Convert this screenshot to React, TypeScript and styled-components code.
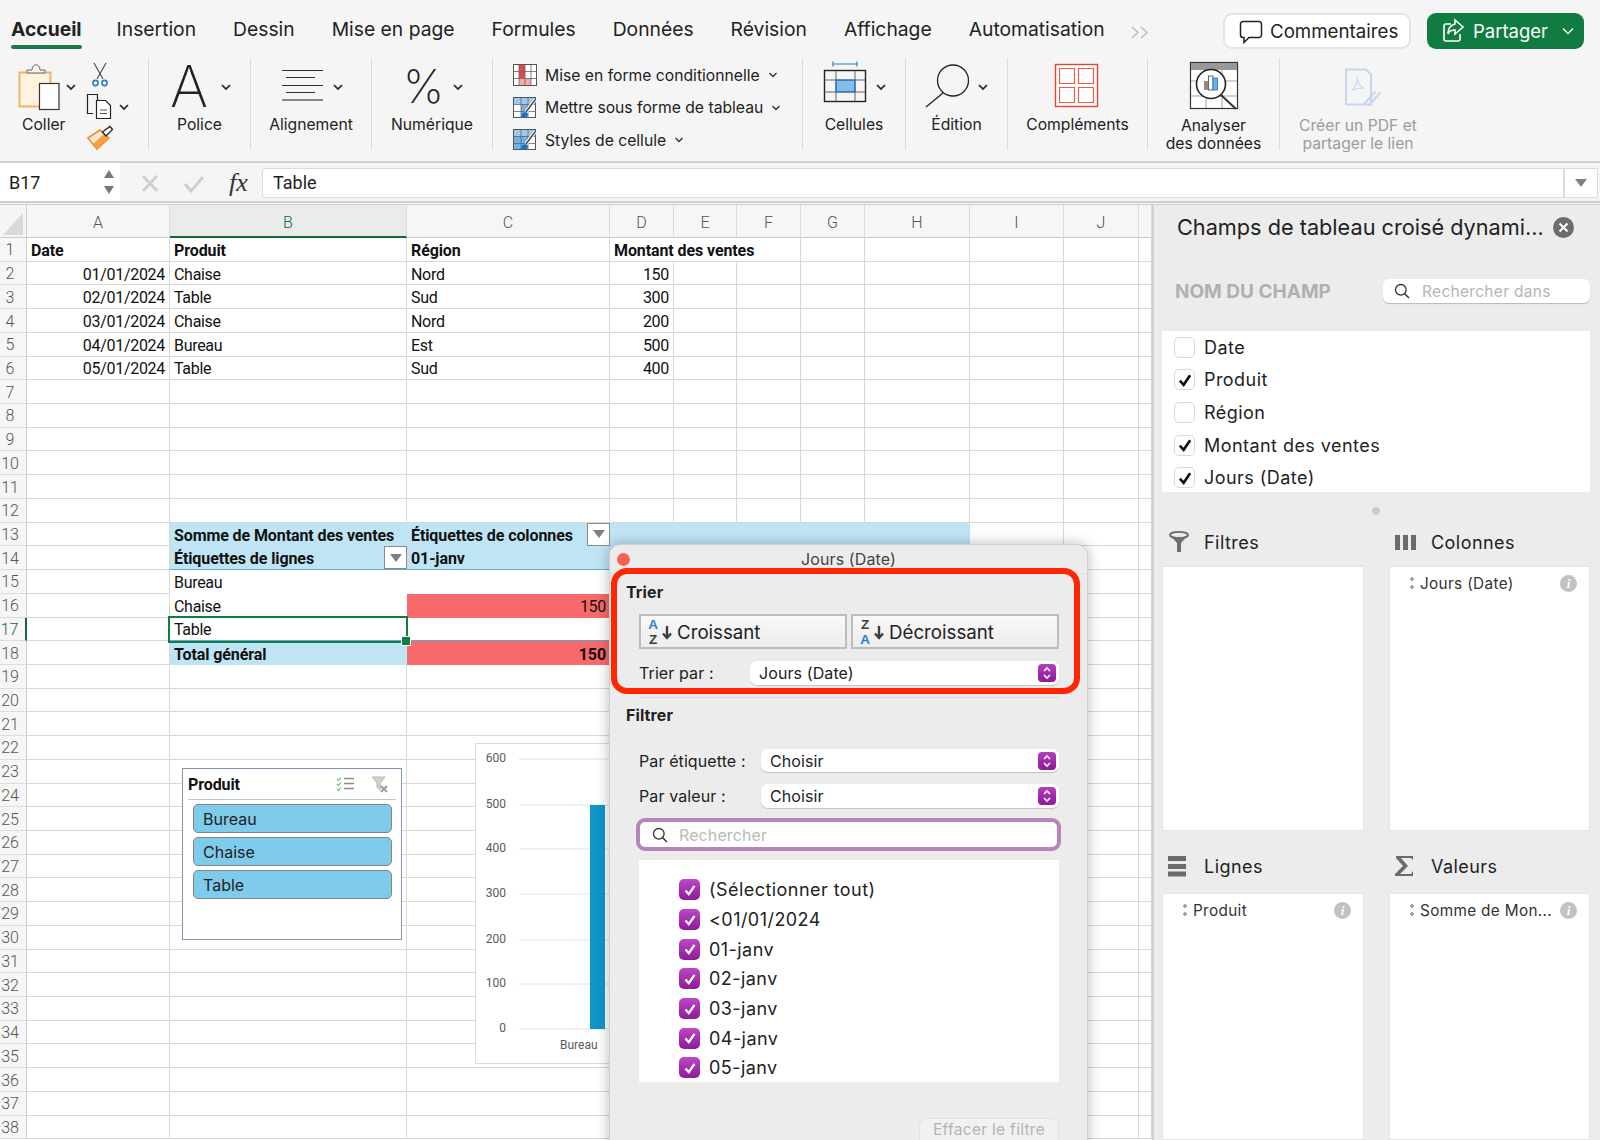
import React from "react";
import styled, { createGlobalStyle } from "styled-components";

const Global = createGlobalStyle`
  html, body { margin: 0; padding: 0; background: #f5f5f5; }
  * { box-sizing: border-box; }
`;

const UI = `Inter, "Liberation Sans", sans-serif`;
const SHEET = `Roboto, "Liberation Sans", sans-serif`;

const Page = styled.div`
  width: 1600px; height: 1140px; overflow: hidden; display: flex; flex-direction: column;
  background: #f5f5f5; font-family: ${UI}; color: #1d1d1d;
`;
const TopBar = styled.div`display: flex; height: 50px; padding: 0 16px 0 11px; align-items: flex-start;`;
const Tabs = styled.div`display: flex; gap: 37px; margin-top: 16px;`;
const Tab = styled.div<{ $active?: boolean }>`
  height: 33px; font-size: 19.3px; line-height: 26px; font-weight: ${p => (p.$active ? 700 : 400)};
  margin-right: ${p => (p.$active ? "-2px" : "0")};
  color: #222; white-space: nowrap;
  &::after { content: ""; display: block; height: 4px; margin-top: 3px; border-radius: 2px; background: ${p => (p.$active ? "#1a7a4a" : "transparent")}; }
`;
const More = styled.div`padding-top: 7px; margin-left: -11px;`;
const TopActions = styled.div`display: flex; gap: 16px; margin: 13px 0 0 auto;`;
const CommentBtn = styled.div`
  width: 188px; height: 36px; background: #fff; border: 2px solid #e4e4e4; border-radius: 9px;
  display: flex; align-items: center; padding-left: 13px; gap: 6px; font-size: 18.7px; color: #222;
`;
const ShareBtn = styled.div`
  width: 157px; height: 36px; background: #107c41; border-radius: 9px; display: flex; align-items: center;
  padding-left: 15px; gap: 9px; font-size: 18.5px; color: #fff;
`;

const Ribbon = styled.div`display: flex; height: 113px; padding-top: 8px; border-bottom: 2px solid #d2d2d2; align-items: flex-start;`;
const Group = styled.div<{ $w: number; $last?: boolean }>`
  width: ${p => p.$w}px; height: 92px; flex: none; display: flex; flex-direction: column; align-items: center;
  border-right: ${p => (p.$last ? "none" : "1px solid #dadada")};
  svg { flex: none; overflow: visible; }
`;
const PasteRow = styled.div`display: flex; width: 100%;`;
const PasteCol = styled.div`width: 84px; flex: none; display: flex; flex-direction: column; align-items: flex-start;`;
const RLabel = styled.div<{ $dim?: boolean; $pl?: number; $two?: boolean }>`
  margin-top: ${p => (p.$two ? 7 : 6)}px; padding-left: ${p => p.$pl ?? 0}px; font-size: 15.7px; line-height: 18px; text-align: center;
  color: ${p => (p.$dim ? "#9c9c9c" : "#222")}; white-space: nowrap;
`;
const StyleGroup = styled(Group)`padding: 1px 0 0 20px; align-items: flex-start;`;
const StyleRow = styled.div`display: flex; flex: none; height: 32.5px; align-items: center; gap: 8px; font-size: 15.7px; color: #222; white-space: nowrap;`;

const FormulaBar = styled.div`display: flex; height: 40px; border-bottom: 2px solid #cfcfcf; flex: none;`;
const NameBox = styled.div`
  width: 120px; background: #fff; padding-left: 9px; display: flex; align-items: center; justify-content: space-between;
  font-size: 18px; padding-right: 4px; font-family: ${SHEET};
`;
const FormulaTools = styled.div`width: 142px; flex: none; display: flex; align-items: center;`;
const FormulaInput = styled.div`
  flex: 1; height: 30px; margin-top: 5px; background: #fff; border: 1px solid #dcdcdc; border-radius: 3px 0 0 3px;
  padding-left: 10px; line-height: 28px; font-size: 18px; font-family: ${SHEET};
`;
const FormulaDrop = styled.div`
  width: 34px; height: 30px; margin: 5px 2px 0 0; background: #fff; border: 1px solid #dcdcdc; display: flex; align-items: center; justify-content: center;
`;

const Main = styled.div`display: flex; flex: 1; min-height: 0; border-top: 1px solid #cfcfcf; margin-top: 1px;`;
const Sheet = styled.div`
  position: relative; width: 1152px; flex: none; background: #fff; overflow: hidden; display: grid;
  grid-template-columns: 27px 143px 237px 203px 64px 63px 64px 64px 105px 94px 75px 13px;
  grid-template-rows: 33px repeat(38, 23.72px);
  font-family: ${SHEET}; font-size: 16px; color: #111;
`;
const Corner = styled.div`
  background: #f5f5f5; border-right: 1px solid #d0d0d0; border-bottom: 1px solid #c8c8c8;
  svg { display: block; }
`;
const ColHead = styled.div<{ $on?: boolean }>`
  padding-top: 3px; display: flex; align-items: center; justify-content: center; font-size: 16px; font-weight: 300;
  background: ${p => (p.$on ? "#ebebeb" : "#f6f6f6")}; color: ${p => (p.$on ? "#0e6b37" : "#555")};
  border-right: 1px solid #dcdcdc; border-bottom: ${p => (p.$on ? "2px solid #0e6b37" : "1px solid #c8c8c8")};
`;
const RowHead = styled.div<{ $on?: boolean }>`
  padding: 1px 6px 0 0; display: flex; align-items: center; justify-content: center; font-size: 16px; font-weight: 300;
  background: #f6f6f6; color: ${p => (p.$on ? "#0e6b37" : "#555")};
  border-bottom: 1px solid #dcdcdc; border-right: ${p => (p.$on ? "2px solid #0e6b37" : "1px solid #cfcfcf")};
`;
const Cell = styled.div<{ $bg?: string; $b?: boolean; $right?: boolean; $span?: number; $noR?: boolean; $noB?: boolean; $line?: boolean }>`
  position: relative; display: flex; align-items: center; white-space: nowrap; min-width: 0;
  padding: 2px 4px 0; letter-spacing: ${p => (p.$b ? "-0.1px" : "-0.3px")};
  justify-content: ${p => (p.$right ? "flex-end" : "flex-start")};
  font-weight: ${p => (p.$b ? 700 : 400)};
  background: ${p => p.$bg ?? "transparent"};
  grid-column: span ${p => p.$span ?? 1};
  border-right: ${p => (p.$noR ? "none" : "1px solid #d8d8d8")};
  border-bottom: ${p => (p.$line ? "1.5px solid #5fa8d3" : p.$noB ? "none" : "1px solid #d8d8d8")};
`;
const Selection = styled.div`
  position: absolute; z-index: 2; left: -2px; top: -2px; width: 240px; height: 27px; border: 2px solid #107c41;
  &::after { content: ""; position: absolute; right: -5px; bottom: -5px; width: 8px; height: 8px; background: #107c41; border: 1px solid #fff; }
`;
const FilterBtn = styled.div`
  position: absolute; right: 0; top: 0; width: 23px; height: 23px; background: #fff; border: 1px solid #8a8a8a;
  display: flex; align-items: center; justify-content: center;
`;

const Slicer = styled.div`
  position: absolute; z-index: 1; left: 182px; top: 563px; width: 220px; height: 172px; background: #fff; border: 1px solid #7f96ae;
  padding: 0 5px; display: flex; flex-direction: column;
`;
const SlicerHead = styled.div`
  height: 31px; flex: none; border-bottom: 1px solid #b8c6d6; display: flex; align-items: center; font-weight: 700; font-size: 16px; letter-spacing: -0.1px;
  svg:first-of-type { margin-left: auto; margin-right: 16px; } svg:last-of-type { margin-right: 7px; }
`;
const SlicerBtn = styled.div`
  height: 29px; flex: none; margin: 4px 4px 0 5px; padding-left: 9px; background: #7fcbec; border: 1px solid #858585; border-radius: 5px;
  display: flex; align-items: center; font-size: 16px; font-family: ${UI}; font-weight: 400; color: #222;
`;
const Chart = styled.div`
  position: absolute; z-index: 1; left: 475px; top: 538px; width: 140px; height: 321px; background: #fff; border: 1px solid #dcdcdc;
  svg { display: block; }
`;

const Dialog = styled.div`
  position: absolute; z-index: 3; left: 609px; top: 339px; width: 479px; height: 640px; background: #ececec; border: 1px solid #cfcfcf;
  border-radius: 11px 11px 0 0; box-shadow: 0 0 14px rgba(0,0,0,.28); font-family: ${UI}; font-size: 16px; letter-spacing: 0.1px; color: #222;
`;
const DialogTitle = styled.div`
  height: 29px; display: grid; grid-template-columns: 1fr auto 1fr; align-items: center; border-bottom: 1px solid #dcdcdc; font-size: 16px; color: #444;
`;
const CloseDot = styled.div`width: 13px; height: 13px; margin-left: 7px; border-radius: 50%; background: #fa5f57;`;
const Highlight = styled.div`
  position: absolute; left: 1px; top: 23px; width: 469px; height: 126px; border: 6.5px solid #ff2600; border-radius: 16px; pointer-events: none;
`;
const Heading = styled.div<{ $mt: number }>`margin: ${p => p.$mt}px 0 0 16px; height: 20px; line-height: 20px; font-size: 16px; font-weight: 700;`;
const Indent = styled.div<{ $mt: number }>`margin: ${p => p.$mt}px 28px 0 29px;`;
const SortRow = styled(Indent)`display: flex; gap: 4px;`;
const SortBtn = styled.div`
  flex: 1; height: 35px; border: 2px solid #bcbcbc; background: linear-gradient(#f8f8f8, #ededed);
  display: flex; align-items: center; padding: 1px 0 0 6px; font-size: 18.7px; letter-spacing: 0;
`;
const SortIcon = styled.div`display: flex; flex-direction: column; align-items: center; font: 700 13.5px/15.5px "Liberation Sans", sans-serif; width: 12px;`;
const SortLetter = styled.span<{ $blue?: boolean }>`color: ${p => (p.$blue ? "#2f7fd0" : "#3d3d3d")};`;
const FieldRow = styled(Indent)`display: flex; align-items: center; justify-content: space-between;`;
const Select = styled.div<{ $w: number; $h: number }>`
  width: ${p => p.$w}px; height: ${p => p.$h}px; background: #fff; border-radius: 7px; box-shadow: 0 1px 1px rgba(0,0,0,.18);
  display: flex; align-items: center; justify-content: space-between; padding: 0 3px 0 9px;
`;
const Stepper = styled.div`
  width: 18px; height: 18px; border-radius: 4px; background: linear-gradient(#b53dc0, #8d1a96); display: flex; align-items: center; justify-content: center;
`;
const Sep = styled(Indent)`height: 1px; background: #d8d8d8;`;
const SearchBox = styled.div`
  margin: 10px 26px 0 26px; height: 33px; background: #fff; border: 4px solid #b685b8; border-radius: 9px;
  display: flex; align-items: center; padding-left: 12px; gap: 11px; color: #b9b9b9;
`;
const DialogList = styled(Indent)`
  height: 222px; background: #fff; padding: 15px 0 0 40px; overflow: hidden;
`;
const CheckRow = styled.div`display: flex; align-items: center; gap: 9px; height: 29.7px; font-size: 18px; letter-spacing: 0.45px;`;
const PurpleBox = styled.div`
  width: 21px; height: 21px; border-radius: 5px; background: linear-gradient(#bd48c8, #8d1a96); display: flex; align-items: center; justify-content: center;
`;
const ClearBtn = styled.div`
  margin: 36px 28px 0 auto; width: 140px; height: 34px; background: #f1f1f1; border: 1px solid #e2e2e2; border-radius: 7px;
  color: #b4b4b4; text-align: center; line-height: 20px; font-size: 15.5px; padding-top: 1px; letter-spacing: .3px;
`;

const Panel = styled.div`
  flex: 1; background: #ececec; border-left: 2px solid #cfcfcf; padding-top: 10px; display: flex; flex-direction: column;
  font-size: 18px; letter-spacing: .45px; overflow: hidden; color: #222;
`;
const PanelTitle = styled.div`display: flex; align-items: center; height: 24px; padding-left: 23px; gap: 9px; font-size: 21.7px; letter-spacing: 0; white-space: nowrap;`;
const CloseCircle = styled.div`
  width: 21px; height: 21px; border-radius: 50%; background: #6d6d6d; display: flex; align-items: center; justify-content: center; flex: none;
`;
const PanelSearchRow = styled.div`display: flex; align-items: center; justify-content: space-between; margin: 40px 10px 0 21px;`;
const FieldLabel = styled.div`font-size: 19px; font-weight: 700; color: #b0b0b0; letter-spacing: 0;`;
const PanelSearch = styled.div`
  width: 207px; height: 24px; background: #fff; border-radius: 6px; box-shadow: 0 1px 1px rgba(0,0,0,.22);
  display: flex; align-items: center; padding-left: 11px; gap: 12px; font-size: 15.5px; color: #b5b5b5; letter-spacing: .3px;
`;
const PanelList = styled.div`margin: 28px 10px 0 8px; height: 161px; flex: none; background: #fff; overflow: hidden; padding-left: 12px;`;
const PanelRow = styled.div`display: flex; align-items: center; height: 32.6px; gap: 9px;`;
const WhiteBox = styled.div`
  width: 21px; height: 21px; border-radius: 5px; background: #fff; border: 1px solid #d8d8d8; display: flex; align-items: center; justify-content: center;
`;
const Dot = styled.div`width: 8px; height: 8px; flex: none; border-radius: 50%; background: #cbcbcb; margin: 15px auto 0; transform: translateX(-1px);`;
const Fields = styled.div`
  display: grid; grid-template-columns: 202px 201px; column-gap: 25px; row-gap: 24px; margin: 16px 0 0 8px;
  grid-template-rows: 300px 1fr; flex: 1; min-height: 0;
`;
const FieldCol = styled.div`display: flex; flex-direction: column; min-height: 0;`;
const AreaHead = styled.div<{ $h: number }>`
  height: ${p => p.$h}px; flex: none; padding: 0 0 0 6px; display: flex; align-items: flex-start;
  & > div:first-child { width: 36px; flex: none; }
  & > span { line-height: 24px; }
`;
const AreaBox = styled.div`flex: 1; background: #fff; border: 1px solid #e4e4e4;`;
const AreaItem = styled.div`
  margin-top: 4px; height: 24px; padding: 0 12px 0 20px; display: flex; align-items: center; font-size: 15.3px; color: #333; letter-spacing: .35px; white-space: nowrap;
`;
const Grip = styled.div`
  width: 4px; height: 12px; margin-right: 6px; flex: none;
  background: radial-gradient(circle 2px at 2px 2px, #a5a5a5 98%, transparent) top/4px 4px no-repeat,
              radial-gradient(circle 2px at 2px 2px, #a5a5a5 98%, transparent) bottom/4px 4px no-repeat;
`;
const Info = styled.div`
  margin-left: auto; width: 17px; height: 17px; border-radius: 50%; background: #c2c2c2; color: #fff; flex: none;
  font: italic 700 13px/17px "Liberation Serif", serif; text-align: center; letter-spacing: 0;
`;

const Chev = ({ x, y, c = "#222" }: { x: number; y: number; c?: string }) => (
  <path d={`M${x - 4} ${y - 2}l4 4 4-4`} fill="none" stroke={c} strokeWidth="1.7" />
);
const SmallChev = () => (
  <svg width="10" height="8" viewBox="0 0 10 8"><path d="M1.5 2 5 5.5 8.5 2" fill="none" stroke="#333" strokeWidth="1.4" /></svg>
);
const Check = ({ c = "#fff", s = 14 }: { c?: string; s?: number }) => (
  <svg width={s} height={s} viewBox="0 0 14 14"><path d="M2.5 7.5 5.8 11.2 11.5 2.8" fill="none" stroke={c} strokeWidth="2.3" /></svg>
);
const StepIcon = () => (
  <svg width="10" height="14" viewBox="0 0 10 14"><path d="M2 5 5 2l3 3M2 9l3 3 3-3" fill="none" stroke="#fff" strokeWidth="1.6" /></svg>
);
const Loupe = ({ s = 16 }: { s?: number }) => (
  <svg width={s} height={s} viewBox="0 0 16 16"><circle cx="6.8" cy="6.8" r="5.3" fill="none" stroke="#333" strokeWidth="1.3" /><path d="M10.7 10.7 15 15" stroke="#333" strokeWidth="1.5" /></svg>
);
const DownTri = () => (
  <svg width="12" height="8" viewBox="0 0 12 8"><path d="M0 0h12L6 8z" fill="#7f7f7f" /></svg>
);
const DownArrow = () => (
  <svg width="10" height="15" viewBox="0 0 10 15"><path d="M5 1v11M1 8.5 5 13l4-4.5" fill="none" stroke="#3d3d3d" strokeWidth="2.4" /></svg>
);

const PasteIcon = () => (
  <svg width="84" height="52">
    <rect x="19.5" y="14.5" width="31" height="34" fill="#fdf3df" stroke="#f3b266" strokeWidth="2" />
    <path d="M27 15v-3h5c0-7 8-7 8 0h5v3z" fill="#f5f5f5" stroke="#666" strokeWidth="1" />
    <rect x="39.5" y="25.5" width="19.5" height="26" fill="#fff" stroke="#333" strokeWidth="1.2" />
    <Chev x={71} y={29} />
  </svg>
);
const ToolsIcon = () => (
  <svg width="65" height="92">
    <path d="M10 5 19 21M22 5 13 21" stroke="#444" strokeWidth="1.1" fill="none" />
    <circle cx="11.5" cy="25" r="2.6" fill="none" stroke="#2a7fc9" strokeWidth="1.6" />
    <circle cx="20.5" cy="25" r="2.6" fill="none" stroke="#2a7fc9" strokeWidth="1.6" />
    <path d="M9 55.5H3.5v-19h10v6" fill="none" stroke="#222" strokeWidth="1.2" />
    <path d="M12.5 42.5h9l5 5v13h-14z" fill="#fff" stroke="#222" strokeWidth="1.2" />
    <path d="M16 52h7M16 55.5h7" stroke="#555" strokeWidth="1" />
    <Chev x={40} y={49} />
    <path d="M4 80 16 72 25 80 13 91z" fill="#fbe9d2" stroke="#ee8a2a" strokeWidth="1.6" />
    <path d="M9 86 20 76 25 80 13 91z" fill="#f5a13e" />
    <path d="M18.5 74 26 68.5l2.5 3-6.5 6.5z" fill="#fff" stroke="#222" strokeWidth="1.3" />
  </svg>
);
const PoliceIcon = () => (
  <svg width="101" height="52">
    <text x="21" y="49" fontFamily="Inter, sans-serif" fontWeight="200" fontSize="58" fill="#222">A</text>
    <Chev x={77} y={29} />
  </svg>
);
const AlignIcon = () => (
  <svg width="120" height="52">
    <path d="M31 12.5h41M35 19.5h29M31 27.5h41M35 34.5h29" stroke="#333" strokeWidth="1.2" />
    <path d="M31 42h41" stroke="#888" strokeWidth="1.8" />
    <Chev x={87} y={29} />
  </svg>
);
const PercentIcon = () => (
  <svg width="120" height="52">
    <text x="31" y="45" fontFamily="Inter, sans-serif" fontWeight="200" fontSize="46" fill="#222">%</text>
    <Chev x={86} y={29} />
  </svg>
);
const CondIcon = () => (
  <svg width="24" height="22" viewBox="0 0 24 22">
    <rect x=".5" y=".5" width="23" height="21" fill="#fff" stroke="#555" />
    <rect x="6" y="1" width="6" height="7" fill="#e8444b" /><rect x="6" y="14" width="12" height="7" fill="#f5a9ac" /><rect x="6" y="8" width="6" height="6" fill="#e8444b" />
    <path d="M6 1v20M12 1v20M18 1v20M1 7.5h22M1 14.5h22" stroke="#666" strokeWidth=".8" />
  </svg>
);
const TableIcon = ({ full }: { full?: boolean }) => (
  <svg width="24" height="22" viewBox="0 0 24 22">
    <rect x=".5" y=".5" width="22" height="20" fill="#fff" stroke="#555" />
    <rect x="1" y="1" width="21" height="6" fill="#9cc9ef" />
    {full ? <rect x="1" y="7" width="14" height="13" fill="#6fb2e8" /> : <rect x="8" y="7" width="7" height="13" fill="#6fb2e8" />}
    <path d="M1 7.5h22M1 14.5h22M8 1v20M15 1v20" stroke="#666" strokeWidth=".8" />
    <path d="M22 3 13 15" stroke="#fff" strokeWidth="3.4" /><path d="M22 3 13 15" stroke="#444" strokeWidth="1.4" />
    <path d="M8 21c0-5 3-7 6-5 2 3-2 5-6 5z" fill="#1f6fc0" />
  </svg>
);
const CellsIcon = () => (
  <svg width="103" height="52">
    <path d="M30 6h24M30 3.5v5M54 3.5v5" stroke="#2a7fc9" strokeWidth="1.2" />
    <rect x="33" y="22" width="19" height="12" fill="#85bdea" />
    <rect x="21.5" y="12.5" width="41" height="31" fill="none" stroke="#222" strokeWidth="1.4" />
    <path d="M21 22h41M21 34h41M33 12.5v31M52 12.5v31" stroke="#555" strokeWidth=".9" />
    <path d="M33 22h19v12H33z" fill="none" stroke="#1f6fc0" strokeWidth="1.2" />
    <Chev x={78} y={29} />
  </svg>
);
const FindIcon = () => (
  <svg width="102" height="52">
    <ellipse cx="47" cy="22.5" rx="15.5" ry="15.5" fill="none" stroke="#222" strokeWidth="1.3" />
    <path d="M37 35 20 49" stroke="#222" strokeWidth="1.3" />
    <Chev x={77} y={29} />
  </svg>
);
const AddinIcon = () => (
  <svg width="140" height="52">
    <rect x="47.5" y="6.5" width="42" height="42" fill="#fff" stroke="#e1462f" strokeWidth="1.4" />
    <path d="M51.5 10.5h15v15h-15zM70.5 10.5h15v15h-15zM51.5 29.5h15v15h-15zM70.5 29.5h15v15h-15z" fill="#fff" stroke="#e8604c" strokeWidth="1.2" />
  </svg>
);
const AnalyzeIcon = () => (
  <svg width="132" height="52">
    <rect x="42.5" y="4.5" width="47" height="46" fill="#fff" stroke="#333" strokeWidth="1.2" />
    <rect x="43" y="5" width="46" height="7" fill="#999" />
    <path d="M43 23h46M43 38h46M58 12v38M74 12v38" stroke="#999" strokeWidth=".9" />
    <circle cx="63" cy="26" r="14.5" fill="#fff" stroke="#222" strokeWidth="1.6" />
    <path d="M73 37 88 51" stroke="#333" strokeWidth="2" />
    <rect x="56" y="23" width="4.5" height="9" fill="#8a8a8a" />
    <rect x="60.5" y="18" width="4.5" height="14" fill="#fff" stroke="#444" strokeWidth=".8" />
    <rect x="65" y="20" width="4.5" height="12" fill="#6fb2e8" stroke="#1f6fc0" strokeWidth=".8" />
  </svg>
);
const PdfIcon = () => (
  <svg width="156" height="52">
    <path d="M66 11.5h20l5 5v30H66z" fill="none" stroke="#c6d6f2" strokeWidth="2" />
    <path d="M72 32c4-3 6-9 5-13 0 5 3 10 7 11-4 0-9 1-12 2z" fill="none" stroke="#c6d6f2" strokeWidth="1.2" />
    <path d="M84 46 95 34M89 47 100 35" stroke="#c6d6f2" strokeWidth="2.2" strokeLinecap="round" />
  </svg>
);

const SlicerCheck = () => (
  <svg width="19" height="16" viewBox="0 0 19 16">
    <path d="M1 3 2.5 4.5 5 1.5M1 8 2.5 9.5 5 6.5M1 13 2.5 14.5 5 11.5" fill="none" stroke="#69c06a" strokeWidth="1.1" />
    <path d="M8 2.5h10M8 7.5h10M8 12.5h10" stroke="#8c8c8c" strokeWidth="1.3" />
  </svg>
);
const SlicerClear = () => (
  <svg width="18" height="17" viewBox="0 0 18 17">
    <path d="M1 1h13L9.5 7v7L6 11.5V7z" fill="#d0d0d0" stroke="#bbb" />
    <path d="M10 10l6 6M16 10l-6 6" stroke="#999" strokeWidth="1.8" />
  </svg>
);

const ChartDraw = () => {
  const ys = [759, 805, 849, 894, 940, 984, 1029];
  const lbl = ["600", "500", "400", "300", "200", "100", "0"];
  return (
    <svg width="138" height="319">
      {ys.map((y, i) => (
        <g key={y}>
          <path d={`M43 ${y - 744}H138`} stroke="#e2e2e2" strokeWidth="1" />
          <text x="30" y={y - 744 + 3} textAnchor="end" fontFamily="Roboto, sans-serif" fontSize="12" fill="#595959">{lbl[i]}</text>
        </g>
      ))}
      <rect x="114" y={61} width="15" height="224" fill="#0f97cb" />
      <text x="84" y="305" fontFamily="Roboto, sans-serif" fontSize="12" fill="#595959">Bureau</text>
    </svg>
  );
};

const COLS = ["A", "B", "C", "D", "E", "F", "G", "H", "I", "J", ""];
const BLUE = "#bfe5f5";
const RED = "#f8696b";
type C = { t?: React.ReactNode; b?: boolean; r?: boolean; span?: number; bg?: string; noR?: boolean; noB?: boolean; line?: boolean; extra?: React.ReactNode };

const data: Record<number, Record<number, C>> = {
  1: { 1: { t: "Date", b: true }, 2: { t: "Produit", b: true }, 3: { t: "Région", b: true }, 4: { t: "Montant des ventes", b: true, span: 3 } },
  2: { 1: { t: "01/01/2024", r: true }, 2: { t: "Chaise" }, 3: { t: "Nord" }, 4: { t: "150", r: true } },
  3: { 1: { t: "02/01/2024", r: true }, 2: { t: "Table" }, 3: { t: "Sud" }, 4: { t: "300", r: true } },
  4: { 1: { t: "03/01/2024", r: true }, 2: { t: "Chaise" }, 3: { t: "Nord" }, 4: { t: "200", r: true } },
  5: { 1: { t: "04/01/2024", r: true }, 2: { t: "Bureau" }, 3: { t: "Est" }, 4: { t: "500", r: true } },
  6: { 1: { t: "05/01/2024", r: true }, 2: { t: "Table" }, 3: { t: "Sud" }, 4: { t: "400", r: true } },
};

const Cells = () => {
  const out: React.ReactNode[] = [];
  out.push(
    <Corner key="corner"><svg width="26" height="32"><path d="M3 30 23 8v22z" fill="#d9d9d9" /></svg></Corner>
  );
  COLS.forEach((c, i) => out.push(<ColHead key={`h${i}`} $on={c === "B"}>{c}</ColHead>));
  for (let r = 1; r <= 38; r++) {
    out.push(<RowHead key={`r${r}`} $on={r === 17}>{r}</RowHead>);
    let c = 1;
    while (c <= 11) {
      let d: C = data[r]?.[c] ?? {};
      const pivotTop = (r === 13 || r === 14) && c >= 2 && c <= 8;
      const pivotBody = r >= 15 && r <= 18 && (c === 2 || c === 3);
      if (pivotTop) {
        d = { bg: BLUE, noR: true, noB: r === 13, line: r === 14, b: true };
        if (r === 13 && c === 2) d.t = "Somme de Montant des ventes";
        if (r === 13 && c === 3) { d.t = "Étiquettes de colonnes"; d.extra = <FilterBtn><DownTri /></FilterBtn>; }
        if (r === 14 && c === 2) { d.t = "Étiquettes de lignes"; d.extra = <FilterBtn><DownTri /></FilterBtn>; }
        if (r === 14 && c === 3) d.t = "01-janv";
      }
      if (pivotBody) {
        d = { noR: true, noB: true };
        if (c === 2) d.t = ["Bureau", "Chaise", "Table", "Total général"][r - 15];
        if (r === 16 && c === 3) { d.bg = RED; d.t = "150"; d.r = true; }
        if (r === 17) { d.line = true; }
        if (r === 18) { d.b = true; d.bg = c === 2 ? BLUE : RED; if (c === 3) { d.t = "150"; d.r = true; } }
        if (r === 17 && c === 2) d.extra = <Selection />;
      }
      out.push(
        <Cell key={`${r}-${c}`} $b={d.b} $right={d.r} $span={d.span} $bg={d.bg} $noR={d.noR} $noB={d.noB} $line={d.line}>
          {d.t}{d.extra}
        </Cell>
      );
      c += d.span ?? 1;
    }
  }
  return <>{out}</>;
};

const SortGlyph = ({ top, bottom, topBlue }: { top: string; bottom: string; topBlue: boolean }) => (
  <SortIcon>
    <SortLetter $blue={topBlue}>{top}</SortLetter>
    <SortLetter $blue={!topBlue}>{bottom}</SortLetter>
  </SortIcon>
);
const Stack = styled.div`display: flex; align-items: center; gap: 3px; margin-right: 5px;`;

const FunnelIcon = () => (
  <svg width="22" height="22" viewBox="0 0 22 22" fill="none">
    <ellipse cx="11" cy="4" rx="9" ry="3" stroke="#6f6f6f" strokeWidth="2" />
    <path d="M2.5 5 9 12v9h4v-9l6.5-7" fill="#6f6f6f" />
    <ellipse cx="11" cy="4" rx="7" ry="2" fill="#ececec" />
  </svg>
);
const ColsIcon = () => (
  <svg width="21" height="22" viewBox="0 0 21 22"><path d="M0 4h5v15H0zM8 4h5v15H8zM16 4h5v15h-5z" fill="#6b6b6b" /></svg>
);
const RowsIcon = () => (
  <svg width="18" height="22" viewBox="0 0 18 22"><path d="M0 1h18v5H0zM0 9h18v5H0zM0 16.5h18v5H0z" fill="#6b6b6b" /></svg>
);
const SigmaIcon = () => (
  <svg width="19" height="22" viewBox="0 0 19 22"><path d="M1 1h17v4l-2-2H6l7 8-8 8h11l2-3v5H0v-2l8-8L1 3z" fill="#6b6b6b" /></svg>
);

export default function App() {
  return (
    <Page>
      <Global />
      <TopBar>
        <Tabs>
          <Tab $active>Accueil</Tab>
          {["Insertion", "Dessin", "Mise en page", "Formules", "Données", "Révision", "Affichage", "Automatisation"].map(t => <Tab key={t}>{t}</Tab>)}
          <More>
            <svg width="19" height="13" viewBox="0 0 19 13"><path d="M1 1l6 5.5L1 12M10 1l6 5.5-6 5.5" fill="none" stroke="#bdbdbd" strokeWidth="1.5" /></svg>
          </More>
        </Tabs>
        <TopActions>
          <CommentBtn>
            <svg width="26" height="26" viewBox="0 0 26 26"><path d="M5 3.5h16a2.5 2.5 0 0 1 2.5 2.5v11a2.5 2.5 0 0 1-2.5 2.5H11l-5 5v-5H5A2.5 2.5 0 0 1 2.5 17V6A2.5 2.5 0 0 1 5 3.5z" fill="none" stroke="#222" strokeWidth="1.5" /></svg>
            Commentaires
          </CommentBtn>
          <ShareBtn>
            <svg width="22" height="26" viewBox="0 0 22 26" fill="none" stroke="#fff" strokeWidth="1.6"><path d="M9 6H4a2 2 0 0 0-2 2v13a2 2 0 0 0 2 2h12a2 2 0 0 0 2-2v-5" /><path d="M13 2l8 7-8 7v-4c-4 0-6 1-7 4 0-6 3-9 7-10z" /></svg>
            Partager
            <svg width="12" height="8" viewBox="0 0 12 8" style={{ marginLeft: 5 }}><path d="M1 1.5 6 6.5l5-5" fill="none" stroke="#fff" strokeWidth="1.4" /></svg>
          </ShareBtn>
        </TopActions>
      </TopBar>

      <Ribbon>
        <Group $w={149}>
          <PasteRow>
            <PasteCol>
              <PasteIcon />
              <RLabel $pl={22}>Coller</RLabel>
            </PasteCol>
            <ToolsIcon />
          </PasteRow>
        </Group>
        <Group $w={102}><PoliceIcon /><RLabel>Police</RLabel></Group>
        <Group $w={121}><AlignIcon /><RLabel>Alignement</RLabel></Group>
        <Group $w={121}><PercentIcon /><RLabel>Numérique</RLabel></Group>
        <StyleGroup $w={310}>
          <StyleRow><CondIcon />Mise en forme conditionnelle<SmallChev /></StyleRow>
          <StyleRow><TableIcon />Mettre sous forme de tableau<SmallChev /></StyleRow>
          <StyleRow><TableIcon full />Styles de cellule<SmallChev /></StyleRow>
        </StyleGroup>
        <Group $w={103}><CellsIcon /><RLabel>Cellules</RLabel></Group>
        <Group $w={102}><FindIcon /><RLabel>Édition</RLabel></Group>
        <Group $w={140}><AddinIcon /><RLabel>Compléments</RLabel></Group>
        <Group $w={132}><AnalyzeIcon /><RLabel $two>Analyser<br />des données</RLabel></Group>
        <Group $w={156} $last><PdfIcon /><RLabel $two $dim>Créer un PDF et<br />partager le lien</RLabel></Group>
      </Ribbon>

      <FormulaBar>
        <NameBox>
          B17
          <svg width="14" height="26" viewBox="0 0 14 26"><path d="M7 1l5 8H2zM7 25l5-8H2z" fill="#777" /></svg>
        </NameBox>
        <FormulaTools>
          <svg width="142" height="38">
            <path d="M23 13 37 28M37 13 23 28" stroke="#cfcfcf" strokeWidth="3" />
            <path d="M65 21 71 28 83 14" stroke="#cfcfcf" strokeWidth="3" fill="none" />
            <text x="109" y="28" fontFamily="'Liberation Serif', serif" fontStyle="italic" fontSize="26" fill="#333">fx</text>
          </svg>
        </FormulaTools>
        <FormulaInput>Table</FormulaInput>
        <FormulaDrop><DownTri /></FormulaDrop>
      </FormulaBar>

      <Main>
        <Sheet>
          <Cells />
          <Slicer>
            <SlicerHead>Produit<SlicerCheck /><SlicerClear /></SlicerHead>
            <SlicerBtn>Bureau</SlicerBtn>
            <SlicerBtn>Chaise</SlicerBtn>
            <SlicerBtn>Table</SlicerBtn>
          </Slicer>
          <Chart><ChartDraw /></Chart>
          <Dialog>
            <DialogTitle><CloseDot /><span>Jours (Date)</span></DialogTitle>
            <Heading $mt={8}>Trier</Heading>
            <SortRow $mt={12}>
              <SortBtn>
                <Stack><SortGlyph top="A" bottom="Z" topBlue /><DownArrow /></Stack>Croissant
              </SortBtn>
              <SortBtn>
                <Stack><SortGlyph top="Z" bottom="A" topBlue={false} /><DownArrow /></Stack>Décroissant
              </SortBtn>
            </SortRow>
            <FieldRow $mt={12}>
              <span>Trier par :</span>
              <Select $w={309} $h={24}>Jours (Date)<Stepper><StepIcon /></Stepper></Select>
            </FieldRow>
            <Sep $mt={12} />
            <Heading $mt={7}>Filtrer</Heading>
            <FieldRow $mt={24}>
              <span>Par étiquette :</span>
              <Select $w={298} $h={23}>Choisir<Stepper><StepIcon /></Stepper></Select>
            </FieldRow>
            <FieldRow $mt={12}>
              <span>Par valeur :</span>
              <Select $w={298} $h={24}>Choisir<Stepper><StepIcon /></Stepper></Select>
            </FieldRow>
            <SearchBox><Loupe />Rechercher</SearchBox>
            <DialogList $mt={9}>
              {["(Sélectionner tout)", "<01/01/2024", "01-janv", "02-janv", "03-janv", "04-janv", "05-janv"].map(t => (
                <CheckRow key={t}><PurpleBox><Check /></PurpleBox>{t}</CheckRow>
              ))}
            </DialogList>
            <ClearBtn>Effacer le filtre</ClearBtn>
            <Highlight />
          </Dialog>
        </Sheet>

        <Panel>
          <PanelTitle>
            Champs de tableau croisé dynami...
            <CloseCircle><svg width="11" height="11" viewBox="0 0 11 11"><path d="M1.5 1.5l8 8M9.5 1.5l-8 8" stroke="#fff" strokeWidth="2" /></svg></CloseCircle>
          </PanelTitle>
          <PanelSearchRow>
            <FieldLabel>NOM DU CHAMP</FieldLabel>
            <PanelSearch><Loupe />Rechercher dans</PanelSearch>
          </PanelSearchRow>
          <PanelList>
            {[["Date", false], ["Produit", true], ["Région", false], ["Montant des ventes", true], ["Jours (Date)", true]].map(([t, on]) => (
              <PanelRow key={t as string}><WhiteBox>{on ? <Check c="#111" s={16} /> : null}</WhiteBox>{t}</PanelRow>
            ))}
          </PanelList>
          <Dot />
          <Fields>
            <FieldCol>
              <AreaHead $h={35}><div><FunnelIcon /></div><span>Filtres</span></AreaHead>
              <AreaBox />
            </FieldCol>
            <FieldCol>
              <AreaHead $h={35}><div><ColsIcon /></div><span>Colonnes</span></AreaHead>
              <AreaBox><AreaItem><Grip />Jours (Date)<Info>i</Info></AreaItem></AreaBox>
            </FieldCol>
            <FieldCol>
              <AreaHead $h={38}><div><RowsIcon /></div><span>Lignes</span></AreaHead>
              <AreaBox><AreaItem><Grip />Produit<Info>i</Info></AreaItem></AreaBox>
            </FieldCol>
            <FieldCol>
              <AreaHead $h={38}><div><SigmaIcon /></div><span>Valeurs</span></AreaHead>
              <AreaBox><AreaItem><Grip />Somme de Mon...<Info>i</Info></AreaItem></AreaBox>
            </FieldCol>
          </Fields>
        </Panel>
      </Main>
    </Page>
  );
}
